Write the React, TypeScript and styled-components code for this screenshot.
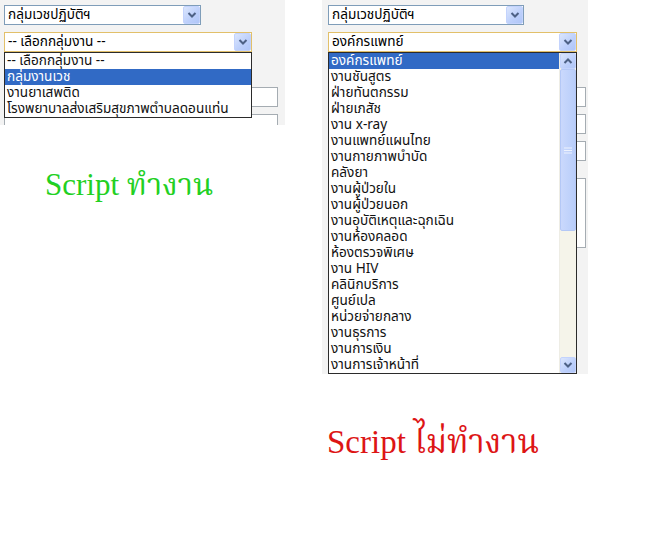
import React from "react"
import styled, { createGlobalStyle } from "styled-components"

const GlobalStyle = createGlobalStyle`
  html, body {
    margin: 0;
    padding: 0;
    background: #ffffff;
  }
  body {
    font-family: Tahoma, "Noto Sans Thai", "Loma", "Garuda", "DejaVu Sans", sans-serif;
  }
`

const Page = styled.div`
  display: flex;
  align-items: flex-start;
  gap: 37px;
  width: 670px;
  height: 538px;
  overflow: hidden;
`

const Column = styled.div`
  display: flex;
  flex-direction: column;
`

const Panel = styled.div<{ $w: number; $h: number; $pad: number }>`
  position: relative;
  box-sizing: border-box;
  width: ${p => p.$w}px;
  height: ${p => p.$h}px;
  padding: 5px 0 0 ${p => p.$pad}px;
  background: #f3f3f3;
  overflow: hidden;
  display: flex;
  flex-direction: column;
  gap: 7px;
`

const SelectBox = styled.div<{ $w: number; $focus?: boolean }>`
  box-sizing: border-box;
  width: ${p => p.$w}px;
  height: 20px;
  flex: none;
  display: flex;
  align-items: center;
  justify-content: space-between;
  background: #ffffff;
  border: 1px solid ${p => (p.$focus ? "#e2c06a" : "#7f9db9")};
  padding-left: 3px;
  font-size: 13.6px;
  line-height: 16px;
  color: #000;
  white-space: nowrap;
`

const ArrowButton = styled.div`
  width: 17px;
  height: 18px;
  flex: none;
  box-sizing: border-box;
  border: 1px solid #c3d3fd;
  border-radius: 2px;
  background: linear-gradient(135deg, #dbe6fd 0%, #bccffb 60%, #b0c6f8 100%);
  display: flex;
  align-items: center;
  justify-content: center;
`

const Field = styled.div<{ $w: number; $h?: number }>`
  box-sizing: border-box;
  width: ${p => p.$w}px;
  height: ${p => p.$h ?? 20}px;
  flex: none;
  background: #ffffff;
  border: 1px solid #a5acb2;
`

const Spacer = styled.div<{ $h: number }>`
  height: ${p => p.$h}px;
  flex: none;
`

const DropList = styled.div<{ $w: number; $left: number; $h: number }>`
  position: absolute;
  top: 52px;
  left: ${p => p.$left}px;
  box-sizing: border-box;
  width: ${p => p.$w}px;
  height: ${p => p.$h}px;
  background: #ffffff;
  border: 1px solid #2b2b2b;
  display: flex;
  overflow: hidden;
`

const Items = styled.div`
  flex: 1;
  display: flex;
  flex-direction: column;
  min-width: 0;
`

const Item = styled.div<{ $active?: boolean }>`
  height: 16px;
  line-height: 16px;
  flex: none;
  padding-left: 2px;
  font-size: 13.6px;
  white-space: nowrap;
  color: ${p => (p.$active ? "#ffffff" : "#111111")};
  background: ${p => (p.$active ? "#316ac5" : "transparent")};
`

const ScrollBar = styled.div`
  width: 16px;
  flex: none;
  display: flex;
  flex-direction: column;
  background: #f5f4ea;
  border-left: 1px solid #eeede5;
`

const ScrollButton = styled(ArrowButton)`
  width: 16px;
  height: 16px;
`

const Thumb = styled.div<{ $h: number }>`
  height: ${p => p.$h}px;
  flex: none;
  box-sizing: border-box;
  border: 1px solid #b4c8f6;
  border-radius: 2px;
  background: linear-gradient(90deg, #cad8fc 0%, #c1d3fb 50%, #b9cdfa 100%);
  display: flex;
  align-items: center;
  justify-content: center;
`

const Track = styled.div`
  flex: 1;
`

const Caption = styled.div<{ $color: string; $left: number; $top: number; $size: number }>`
  margin: ${p => p.$top}px 0 0 ${p => p.$left}px;
  font-family: "Liberation Serif", "Times New Roman", "Noto Serif Thai", "Norasi", serif;
  font-size: ${p => p.$size}px;
  line-height: 36px;
  color: ${p => p.$color};
  white-space: nowrap;
`

const Chevron = ({ up }: { up?: boolean }) => (
  <svg width="10" height="8" viewBox="0 0 10 8">
    <path
      d={up ? "M1.5 6 L5 2.5 L8.5 6" : "M1.5 2 L5 5.5 L8.5 2"}
      fill="none"
      stroke="#4d6185"
      strokeWidth="2"
    />
  </svg>
)

const Grip = () => (
  <svg width="8" height="7" viewBox="0 0 8 7">
    <path d="M0 1 H8 M0 3.5 H8 M0 6 H8" stroke="#eef3fe" strokeWidth="1" />
  </svg>
)

interface ISelectProp {
  width: number
  value: string
  focus?: boolean
}

const Select: React.FC<ISelectProp> = ({ width, value, focus }) => (
  <SelectBox $w={width} $focus={focus}>
    <span>{value}</span>
    <ArrowButton>
      <Chevron />
    </ArrowButton>
  </SelectBox>
)

const groupOptions = [
  "-- เลือกกลุ่มงาน --",
  "กลุ่มงานเวช",
  "งานยาเสพติด",
  "โรงพยาบาลส่งเสริมสุขภาพตำบลดอนแท่น",
]

const deptOptions = [
  "องค์กรแพทย์",
  "งานชันสูตร",
  "ฝ่ายทันตกรรม",
  "ฝ่ายเภสัช",
  "งาน x-ray",
  "งานแพทย์แผนไทย",
  "งานกายภาพบำบัด",
  "คลังยา",
  "งานผู้ป่วยใน",
  "งานผู้ป่วยนอก",
  "งานอุบัติเหตุและฉุกเฉิน",
  "งานห้องคลอด",
  "ห้องตรวจพิเศษ",
  "งาน HIV",
  "คลินิกบริการ",
  "ศูนย์เปล",
  "หน่วยจ่ายกลาง",
  "งานธุรการ",
  "งานการเงิน",
  "งานการเจ้าหน้าที่",
]

const WorkingShot = () => (
  <Panel $w={285} $h={125} $pad={4}>
    <Select width={197} value="กลุ่มเวชปฏิบัติฯ" />
    <Select width={248} value="-- เลือกกลุ่มงาน --" focus />
    <Spacer $h={21} />
    <Field $w={274} />
    <Field $w={274} />
    <DropList $w={248} $left={4} $h={66}>
      <Items>
        {groupOptions.map((o, i) => (
          <Item key={o} $active={i === 1}>
            {o}
          </Item>
        ))}
      </Items>
    </DropList>
  </Panel>
)

const BrokenShot = () => (
  <Panel $w={266} $h={374} $pad={6}>
    <Select width={196} value="กลุ่มเวชปฏิบัติฯ" />
    <Select width={249} value="องค์กรแพทย์" focus />
    <Spacer $h={21} />
    <Field $w={258} />
    <Field $w={258} />
    <Field $w={258} />
    <Spacer $h={3} />
    <Field $w={258} $h={70} />
    <DropList $w={249} $left={6} $h={322}>
      <Items>
        {deptOptions.map((o, i) => (
          <Item key={o} $active={i === 0}>
            {o}
          </Item>
        ))}
      </Items>
      <ScrollBar>
        <ScrollButton>
          <Chevron up />
        </ScrollButton>
        <Thumb $h={162}>
          <Grip />
        </Thumb>
        <Track />
        <ScrollButton>
          <Chevron />
        </ScrollButton>
      </ScrollBar>
    </DropList>
  </Panel>
)

export default function App() {
  return (
    <>
      <GlobalStyle />
      <Page>
        <Column>
          <WorkingShot />
          <Caption $color="#22d022" $left={45} $top={42} $size={31}>
            Script ทำงาน
          </Caption>
        </Column>
        <Column>
          <BrokenShot />
          <Caption $color="#dd1515" $left={5} $top={50} $size={33}>
            Script ไม่ทำงาน
          </Caption>
        </Column>
      </Page>
    </>
  )
}
